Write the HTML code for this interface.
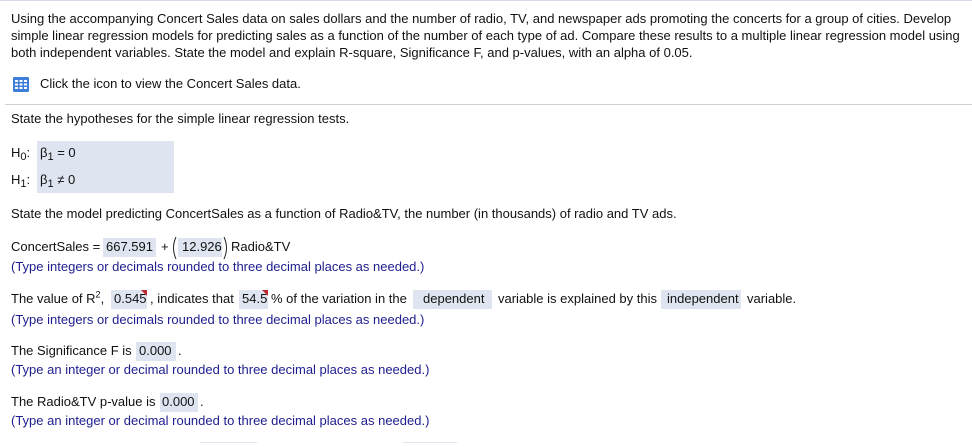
<!DOCTYPE html>
<html><head><meta charset="utf-8"><style>
body{margin:0;width:972px;height:447px;background:#fff;font-family:"Liberation Sans",Arial,sans-serif;font-size:13px;color:#111;position:relative;overflow:hidden}
.a{position:absolute;white-space:nowrap;line-height:16px}
.b{position:absolute;background:#dfe5f0}
.h{color:#1d1d8f}
.tri{position:absolute;width:0;height:0;border-top:6px solid #c0282d;border-left:6px solid transparent}
sub{font-size:11px;position:relative;top:3px;vertical-align:baseline}
sup{font-size:9px;line-height:0}
</style></head><body>
<div style="position:absolute;left:0;right:0;top:0;height:1px;background:#d5dbe6"></div>
<div class="a" style="left:11px;top:10px;line-height:17px;white-space:normal;width:955px">Using the accompanying Concert Sales data on sales dollars and the number of radio, TV, and newspaper ads promoting the concerts for a group of cities. Develop simple linear regression models for predicting sales as a function of the number of each type of ad. Compare these results to a multiple linear regression model using both independent variables. State the model and explain R-square, Significance F, and p-values, with an alpha of 0.05.</div>
<svg style="position:absolute;left:13px;top:77px" width="16" height="15" viewBox="0 0 16 15"><rect x="0" y="0" width="16" height="15" rx="1.5" fill="#3d7fd8"/><g fill="#fff"><rect x="2" y="3" width="3" height="2"/><rect x="6.5" y="3" width="3" height="2"/><rect x="11" y="3" width="3" height="2"/><rect x="2" y="6.5" width="3" height="2"/><rect x="6.5" y="6.5" width="3" height="2"/><rect x="11" y="6.5" width="3" height="2"/><rect x="2" y="10" width="3" height="2"/><rect x="6.5" y="10" width="3" height="2"/><rect x="11" y="10" width="3" height="2"/></g></svg>
<div class="a" style="left:40px;top:76px">Click the icon to view the Concert Sales data.</div>
<div style="position:absolute;left:5px;right:0;top:104px;height:1px;background:#cfcfcf"></div>
<div class="a" style="left:11px;top:111px">State the hypotheses for the simple linear regression tests.</div>
<div class="b" style="left:37px;top:141px;width:137px;height:52px"></div>
<div class="a" style="left:11px;top:145px">H<sub>0</sub>:</div><div class="a" style="left:40px;top:145px">β<sub>1</sub> = 0</div>
<div class="a" style="left:11px;top:172px">H<sub>1</sub>:</div><div class="a" style="left:40px;top:172px">β<sub>1</sub> ≠ 0</div>
<div class="a" style="left:11px;top:206px">State the model predicting ConcertSales as a function of Radio&amp;TV, the number (in thousands) of radio and TV ads.</div>
<div class="b" style="left:103px;top:238px;width:53px;height:19px"></div>
<div class="b" style="left:178px;top:238px;width:44px;height:19px"></div>
<div class="a" style="left:11px;top:239px">ConcertSales =</div>
<div class="a" style="left:106px;top:239px">667.591</div>
<div class="a" style="left:161px;top:239px">+</div>
<svg style="position:absolute;left:170px;top:236px" width="8" height="24"><path d="M6 1 Q1 12 6 23" stroke="#222" fill="none" stroke-width="1"/></svg>
<div class="a" style="left:182px;top:239px">12.926</div>
<svg style="position:absolute;left:222px;top:236px" width="8" height="24"><path d="M2 1 Q7 12 2 23" stroke="#222" fill="none" stroke-width="1"/></svg>
<div class="a" style="left:231px;top:239px">Radio&amp;TV</div>
<div class="a h" style="left:11px;top:259px">(Type integers or decimals rounded to three decimal places as needed.)</div>
<div class="b" style="left:111px;top:290px;width:36px;height:19px"></div>
<div class="tri" style="left:141px;top:290px"></div>
<div class="b" style="left:239px;top:290px;width:29px;height:19px"></div>
<div class="tri" style="left:262px;top:290px"></div>
<div class="b" style="left:413px;top:290px;width:79px;height:19px"></div>
<div class="b" style="left:661px;top:290px;width:80px;height:19px"></div>
<div class="a" style="left:11px;top:291px">The value of R<sup>2</sup>,</div>
<div class="a" style="left:114px;top:291px">0.545</div>
<div class="a" style="left:150px;top:291px">, indicates that</div>
<div class="a" style="left:242px;top:291px">54.5</div>
<div class="a" style="left:271px;top:291px">% of the variation in the</div>
<div class="a" style="left:423px;top:291px">dependent</div>
<div class="a" style="left:498px;top:291px">variable is explained by this</div>
<div class="a" style="left:667px;top:291px">independent</div>
<div class="a" style="left:747px;top:291px">variable.</div>
<div class="a h" style="left:11px;top:312px">(Type integers or decimals rounded to three decimal places as needed.)</div>
<div class="b" style="left:136px;top:342px;width:40px;height:19px"></div>
<div class="a" style="left:11px;top:343px">The Significance F is</div>
<div class="a" style="left:139px;top:343px">0.000</div>
<div class="a" style="left:178px;top:343px">.</div>
<div class="a h" style="left:11px;top:362px">(Type an integer or decimal rounded to three decimal places as needed.)</div>
<div class="b" style="left:160px;top:393px;width:38px;height:19px"></div>
<div class="a" style="left:11px;top:394px">The Radio&amp;TV p-value is</div>
<div class="a" style="left:162px;top:394px">0.000</div>
<div class="a" style="left:200px;top:394px">.</div>
<div class="a h" style="left:11px;top:413px">(Type an integer or decimal rounded to three decimal places as needed.)</div>
<div style="position:absolute;left:200px;top:442px;width:57px;height:1px;background:#dde3ef"></div>
<div style="position:absolute;left:403px;top:442px;width:54px;height:1px;background:#dde3ef"></div>
</body></html>
